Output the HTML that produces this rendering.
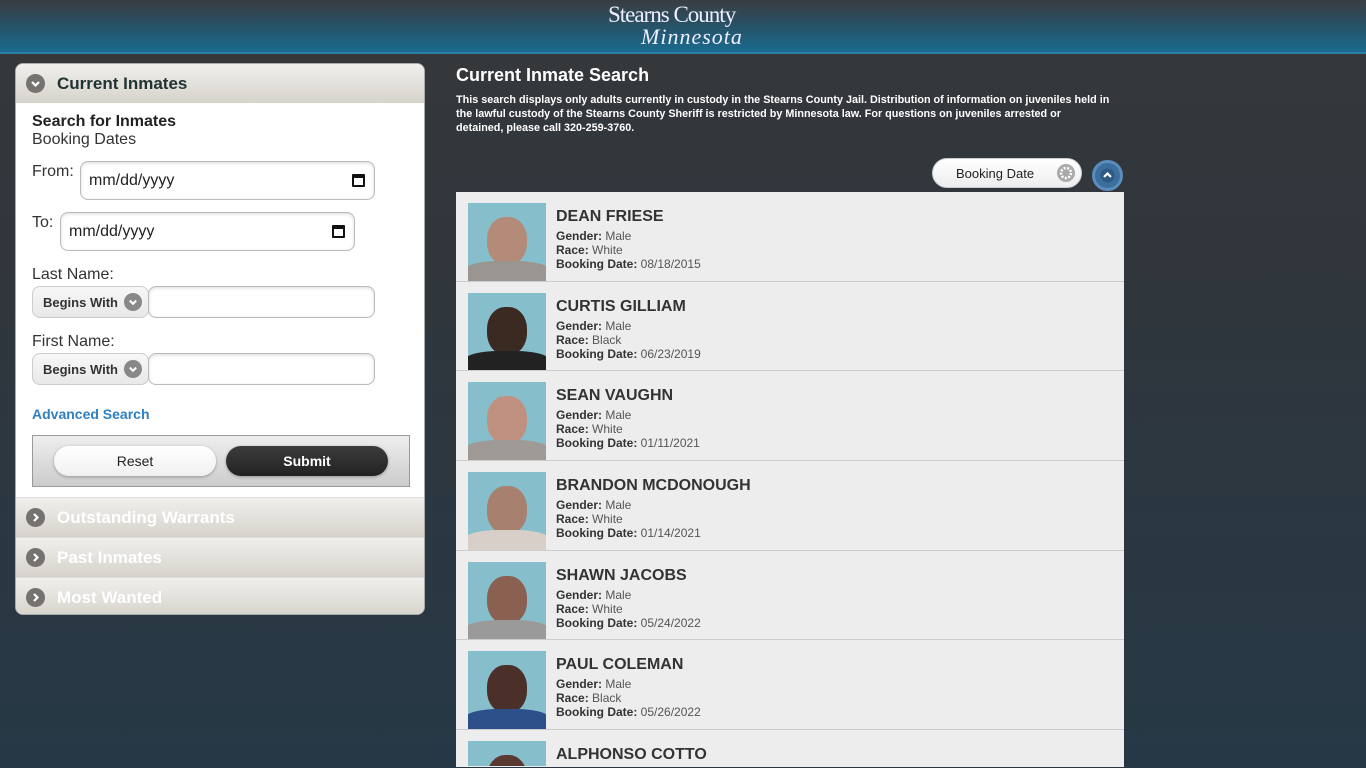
<!DOCTYPE html>
<html><head><meta charset="utf-8"><style>
*{box-sizing:border-box;margin:0;padding:0}
html{width:1366px;height:768px;overflow:hidden}
body{width:1366px;height:768px;overflow:hidden;font-family:"Liberation Sans",Arial,sans-serif;background:linear-gradient(#35383b 0px,#2f363c 300px,#263846 768px);position:relative}
.hdr{position:absolute;left:0;top:0;width:1366px;height:54px;background:linear-gradient(#3a3d40,#2b4d60 40%,#1a6b8f);border-bottom:2px solid #2b7fa6}
.logo1{position:absolute;left:608px;top:2px;font-family:"Liberation Serif",serif;color:#eef;font-size:23px;letter-spacing:-1px}
.logo2{position:absolute;left:641px;top:24px;font-family:"Liberation Serif",serif;font-style:italic;color:#eef;font-size:22px;letter-spacing:1px}
.panel{position:absolute;left:15px;top:63px;width:410px;height:552px;border-radius:8px;background:#fff;overflow:hidden;border:1px solid #aaa}
.acc{height:40px;background:linear-gradient(#f0efec,#d6d3cb);display:flex;align-items:center;padding-left:10px;font-weight:bold;font-size:17px;color:#fff;border-top:1px solid #ddd}
.acc.cur{color:#233;height:39px;border:0}
.ic{width:19px;height:19px;border-radius:50%;background:#757270;margin-right:12px;position:relative;display:inline-block}
.ic svg{position:absolute;left:4px;top:4px}
.lbl{position:absolute;font-size:16px;color:#333}
.inp{position:absolute;border:1px solid #bbb;border-radius:8px;background:#fff;box-shadow:inset 0 1px 3px rgba(0,0,0,.15);font-size:16px;color:#222;padding:10px 8px}
.cal{position:absolute;right:9px;top:12px;width:13px;height:13px;border:2px solid #111;border-top-width:4px;border-radius:1px}
.sel{position:absolute;height:32px;width:117px;border:1px solid #ccc;border-radius:8px;background:linear-gradient(#f7f7f7,#e8e8e8);font-size:13px;font-weight:bold;color:#333;padding:8px 0 0 10px}
.sel .ic{position:absolute;right:6px;top:6px;width:18px;height:18px;background:#888;margin:0}
.btnbar{position:absolute;left:16px;top:371px;width:378px;height:52px;border:1px solid #999;background:linear-gradient(#eee,#ccc)}
.btn{position:absolute;top:10px;height:30px;width:162px;border-radius:15px;text-align:center;font-size:14px;padding-top:7px;box-shadow:0 1px 3px rgba(0,0,0,.3)}
h1{position:absolute;left:456px;top:65px;color:#fff;font-size:18px}
.desc{position:absolute;left:456px;top:93px;width:680px;color:#fff;font-size:10.8px;font-weight:bold;line-height:14px;white-space:nowrap}
.sort{position:absolute;left:932px;top:158px;width:150px;height:30px;border-radius:15px;background:linear-gradient(#fff,#eee);border:1px solid #ccc;font-size:13px;color:#222;padding:7px 0 0 23px}
.sort svg{position:absolute;right:6px;top:5px}
.up{position:absolute;left:1092px;top:160px;width:31px;height:31px;border-radius:50%;background:#3d6f9c;border:3px solid #5a8dbd}
.list{position:absolute;left:456px;top:192px;width:668px;height:575px;background:#ededed;overflow:hidden}
.row{height:89.7px;border-bottom:1px solid #ccc;position:relative;overflow:hidden}
.row.last{height:36px;border:0}
.ph{position:absolute;left:12px;top:11px;width:78px;height:78px;background:#86bfcb;overflow:hidden}
.last .ph{height:25px}
.ph .hd{position:absolute;left:19px;top:14px;width:40px;height:48px;border-radius:45%;}
.ph .sh{position:absolute;left:-2px;top:58px;width:82px;height:20px;border-radius:40% 40% 0 0}
.nm{position:absolute;left:100px;top:16px;font-size:16px;font-weight:bold;color:#333}
.inf{position:absolute;left:100px;top:37px;font-size:12px;line-height:14px;color:#555}
.inf b{color:#333}
</style></head><body>
<div class="hdr"><div class="logo1">Stearns County</div><div class="logo2">Minnesota</div></div>

<div class="panel">
<div class="acc cur"><span class="ic"><svg width="11" height="11" viewBox="0 0 11 11"><path d="M2 4l3.5 3.5L9 4" stroke="#fff" stroke-width="2.2" fill="none"/></svg></span>Current Inmates</div>
<div style="position:absolute;left:16px;top:49px;font-size:16px;font-weight:bold;color:#222">Search for Inmates</div>
<div class="lbl" style="left:16px;top:67px">Booking Dates</div>
<div class="lbl" style="left:16px;top:99px">From:</div>
<div class="inp" style="left:64px;top:97px;width:295px;height:39px">mm/dd/yyyy<div class="cal"></div></div>
<div class="lbl" style="left:16px;top:150px">To:</div>
<div class="inp" style="left:44px;top:148px;width:295px;height:39px">mm/dd/yyyy<div class="cal"></div></div>
<div class="lbl" style="left:16px;top:202px">Last Name:</div>
<div class="sel" style="left:16px;top:222px">Begins With<span class="ic"><svg width="10" height="10" viewBox="0 0 11 11"><path d="M2 4l3.5 3.5L9 4" stroke="#fff" stroke-width="2.2" fill="none"/></svg></span></div>
<div class="inp" style="left:132px;top:222px;width:227px;height:32px"></div>
<div class="lbl" style="left:16px;top:269px">First Name:</div>
<div class="sel" style="left:16px;top:289px">Begins With<span class="ic"><svg width="10" height="10" viewBox="0 0 11 11"><path d="M2 4l3.5 3.5L9 4" stroke="#fff" stroke-width="2.2" fill="none"/></svg></span></div>
<div class="inp" style="left:132px;top:289px;width:227px;height:32px"></div>
<div style="position:absolute;left:16px;top:342px;font-size:14px;font-weight:bold;color:#2f7fc1">Advanced Search</div>
<div class="btnbar">
<div class="btn" style="left:21px;background:linear-gradient(#fff,#f0f0f0);color:#222">Reset</div>
<div class="btn" style="left:193px;background:linear-gradient(#3c3c3c,#222);color:#fff;font-weight:bold">Submit</div>
</div>
<div style="position:absolute;left:0;top:433px;width:410px">
<div class="acc"><span class="ic"><svg width="11" height="11" viewBox="0 0 11 11"><path d="M4 2l3.5 3.5L4 9" stroke="#fff" stroke-width="2.2" fill="none"/></svg></span>Outstanding Warrants</div>
<div class="acc"><span class="ic"><svg width="11" height="11" viewBox="0 0 11 11"><path d="M4 2l3.5 3.5L4 9" stroke="#fff" stroke-width="2.2" fill="none"/></svg></span>Past Inmates</div>
<div class="acc"><span class="ic"><svg width="11" height="11" viewBox="0 0 11 11"><path d="M4 2l3.5 3.5L4 9" stroke="#fff" stroke-width="2.2" fill="none"/></svg></span>Most Wanted</div>
</div>
</div>

<h1>Current Inmate Search</h1>
<div class="desc">This search displays only adults currently in custody in the Stearns County Jail. Distribution of information on juveniles held in<br>the lawful custody of the Stearns County Sheriff is restricted by Minnesota law. For questions on juveniles arrested or<br>detained, please call 320-259-3760.</div>
<div class="sort">Booking Date<svg width="18" height="18" viewBox="0 0 18 18"><circle cx="9" cy="9" r="9" fill="#aaa"/><circle cx="9" cy="9" r="5" fill="none" stroke="#fff" stroke-width="2.5" stroke-dasharray="2 1.5"/><circle cx="9" cy="9" r="2" fill="#aaa"/></svg></div>
<div class="up"><svg width="25" height="25" viewBox="0 0 25 25" style="position:absolute;left:0;top:0"><circle cx="12.5" cy="12.5" r="7" fill="#2c5a85"/><path d="M9 14l3.5-3.5L16 14" stroke="#fff" stroke-width="2.2" fill="none"/></svg></div>

<div class="list">
<div class="row"><div class="ph"><div class="hd" style="background:#b48a78"></div><div class="sh" style="background:#9a9590"></div></div><div class="nm">DEAN FRIESE</div><div class="inf"><b>Gender:</b> Male<br><b>Race:</b> White<br><b>Booking Date:</b> 08/18/2015</div></div>
<div class="row"><div class="ph"><div class="hd" style="background:#3a2a22"></div><div class="sh" style="background:#222"></div></div><div class="nm">CURTIS GILLIAM</div><div class="inf"><b>Gender:</b> Male<br><b>Race:</b> Black<br><b>Booking Date:</b> 06/23/2019</div></div>
<div class="row"><div class="ph"><div class="hd" style="background:#c09080"></div><div class="sh" style="background:#a09a96"></div></div><div class="nm">SEAN VAUGHN</div><div class="inf"><b>Gender:</b> Male<br><b>Race:</b> White<br><b>Booking Date:</b> 01/11/2021</div></div>
<div class="row"><div class="ph"><div class="hd" style="background:#a88070"></div><div class="sh" style="background:#d8d0c8"></div></div><div class="nm">BRANDON MCDONOUGH</div><div class="inf"><b>Gender:</b> Male<br><b>Race:</b> White<br><b>Booking Date:</b> 01/14/2021</div></div>
<div class="row"><div class="ph"><div class="hd" style="background:#8a6050"></div><div class="sh" style="background:#9a9a9a"></div></div><div class="nm">SHAWN JACOBS</div><div class="inf"><b>Gender:</b> Male<br><b>Race:</b> White<br><b>Booking Date:</b> 05/24/2022</div></div>
<div class="row"><div class="ph"><div class="hd" style="background:#4a3028"></div><div class="sh" style="background:#2d4f8a"></div></div><div class="nm">PAUL COLEMAN</div><div class="inf"><b>Gender:</b> Male<br><b>Race:</b> Black<br><b>Booking Date:</b> 05/26/2022</div></div>
<div class="row last"><div class="ph"><div class="hd" style="background:#5a3a30"></div></div><div class="nm">ALPHONSO COTTO</div></div>
</div>
</body></html>
